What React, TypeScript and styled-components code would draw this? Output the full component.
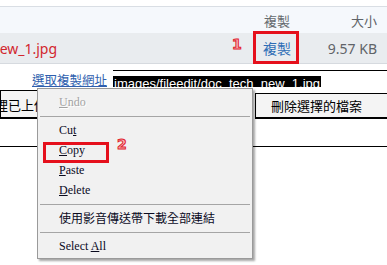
import React from "react";
import styled, { createGlobalStyle } from "styled-components";

const GlobalStyle = createGlobalStyle`
  html, body {
    margin: 0;
    padding: 0;
    background: #ffffff;
    overflow: hidden;
  }
`;

const Page = styled.div`
  position: relative;
  width: 387px;
  height: 265px;
  overflow: hidden;
  padding-top: 6px;
  box-sizing: border-box;
  font-family: "Noto Sans", "Noto Sans CJK TC", sans-serif;
`;

const FileTable = styled.div`
  border-top: 1px solid #d9dee4;
  border-bottom: 1px solid #d6dadf;
`;

const Row = styled.div<{ $head?: boolean }>`
  display: grid;
  grid-template-columns: 1fr 50px 75px;
  align-items: center;
  height: ${(p) => (p.$head ? 26 : 30)}px;
  padding-right: 10px;
  background: ${(p) => (p.$head ? "#f5f8fc" : "#e9ecef")};
  font-size: ${(p) => (p.$head ? 13 : 14)}px;
  color: #5f6368;
`;

const NameCell = styled.span`
  color: #d2262e;
  margin-left: -9px;
  white-space: nowrap;
`;

const CopyCell = styled.span<{ $link?: boolean }>`
  text-align: center;
  color: ${(p) => (p.$link ? "#2d6db5" : "#666a6e")};
  font-family: "Noto Sans CJK TC", sans-serif;
`;

const SizeCell = styled.span`
  text-align: right;
  white-space: nowrap;
`;

const UrlRow = styled.div`
  display: flex;
  align-items: flex-end;
  margin-top: 7px;
  height: 16px;
`;

const CopyLink = styled.a`
  margin-left: 32px;
  font-family: "Noto Sans CJK TC", sans-serif;
  font-size: 12.5px;
  line-height: 15px;
  color: #2f5fae;
  text-decoration: underline;
  white-space: nowrap;
`;

const AddressBox = styled.div`
  flex: 1;
  margin-left: 6px;
  height: 16px;
  border-top: 1px solid #000;
  overflow: hidden;
`;

const Selected = styled.span`
  display: inline-block;
  background: #000;
  color: #fff;
  font-family: "Liberation Sans", Arial, sans-serif;
  font-size: 13px;
  line-height: 16px;
  height: 16px;
  padding: 0 1px;
  white-space: nowrap;
`;

const ButtonRow = styled.div`
  display: flex;
  align-items: flex-end;
  margin-top: 4px;
  height: 28px;
  gap: 45px;
`;

const LegacyButton = styled.div<{ $width: number; $height: number }>`
  flex: none;
  box-sizing: border-box;
  width: ${(p) => p.$width}px;
  height: ${(p) => p.$height}px;
  border: 1px solid #000;
  border-right-width: 2px;
  border-bottom-width: 2px;
  background: #f4f4f4;
  font-family: "Noto Sans CJK TC", sans-serif;
  font-size: 13px;
  color: #000;
  display: flex;
  align-items: center;
  white-space: nowrap;
  overflow: hidden;
`;

const LeftLabel = styled.span`
  margin-left: -6px;
`;

const RightLabel = styled.span`
  margin-left: 15px;
`;

const Rule = styled.div`
  margin-top: 27px;
  border-top: 1px solid #000;
`;

const Menu = styled.div`
  position: absolute;
  left: 37px;
  top: 88px;
  width: 216px;
  box-sizing: border-box;
  padding: 3px 2px 2px;
  background: #f1f1f1;
  border: 1px solid #9a9a9a;
  box-shadow: 2px 2px 2px rgba(0, 0, 0, 0.35);
  font-family: "Liberation Serif", "Times New Roman", serif;
  font-size: 12px;
  color: #0a0a1e;
`;

const MenuItem = styled.div<{ $disabled?: boolean; $cjk?: boolean }>`
  height: 20px;
  line-height: 20px;
  padding-left: 19px;
  white-space: nowrap;
  color: ${(p) => (p.$disabled ? "#a3a3a3" : "#0a0a1e")};
  text-shadow: ${(p) => (p.$disabled ? "1px 1px 0 #ffffff" : "none")};
  font-family: ${(p) =>
    p.$cjk ? '"Noto Sans CJK TC", sans-serif' : '"Liberation Serif", serif'};
`;

const Separator = styled.div`
  height: 8px;
  display: flex;
  align-items: center;

  &::after {
    content: "";
    flex: 1;
    border-top: 1px solid #a5a5a5;
  }
`;

const RedBox = styled.div<{ $x: number; $y: number; $w: number; $h: number }>`
  position: absolute;
  left: ${(p) => p.$x}px;
  top: ${(p) => p.$y}px;
  width: ${(p) => p.$w}px;
  height: ${(p) => p.$h}px;
  box-sizing: border-box;
  border: 3px solid #e5101c;
`;

const Marker = styled.span<{ $x: number; $y: number }>`
  position: absolute;
  left: ${(p) => p.$x}px;
  top: ${(p) => p.$y}px;
  font-family: "DejaVu Sans", sans-serif;
  font-weight: bold;
  font-size: 14px;
  line-height: 14px;
  color: #f7b9bd;
  -webkit-text-stroke: 1px #e2232e;
`;

export default function App() {
  return (
    <Page>
      <GlobalStyle />
      <FileTable>
        <Row $head>
          <span />
          <CopyCell>複製</CopyCell>
          <SizeCell>大小</SizeCell>
        </Row>
        <Row>
          <NameCell>new_1.jpg</NameCell>
          <CopyCell $link>複製</CopyCell>
          <SizeCell>9.57 KB</SizeCell>
        </Row>
      </FileTable>

      <UrlRow>
        <CopyLink>選取複製網址</CopyLink>
        <AddressBox>
          <Selected>images/fileedit/doc_tech_new_1.jpg</Selected>
        </AddressBox>
      </UrlRow>

      <ButtonRow>
        <LegacyButton $width={210} $height={29}>
          <LeftLabel>裡已上傳的檔案</LeftLabel>
        </LegacyButton>
        <LegacyButton $width={140} $height={26}>
          <RightLabel>刪除選擇的檔案</RightLabel>
        </LegacyButton>
      </ButtonRow>

      <Rule />

      <Menu>
        <MenuItem $disabled>
          <u>U</u>ndo
        </MenuItem>
        <Separator />
        <MenuItem>
          Cu<u>t</u>
        </MenuItem>
        <MenuItem>
          <u>C</u>opy
        </MenuItem>
        <MenuItem>
          <u>P</u>aste
        </MenuItem>
        <MenuItem>
          <u>D</u>elete
        </MenuItem>
        <Separator />
        <MenuItem $cjk>使用影音傳送帶下載全部連結</MenuItem>
        <Separator />
        <MenuItem>
          Select <u>A</u>ll
        </MenuItem>
      </Menu>

      <RedBox $x={253} $y={31} $w={46} $h={33} />
      <Marker $x={232} $y={37}>1</Marker>
      <RedBox $x={43} $y={142} $w={66} $h={21} />
      <Marker $x={117} $y={137}>2</Marker>
    </Page>
  );
}
